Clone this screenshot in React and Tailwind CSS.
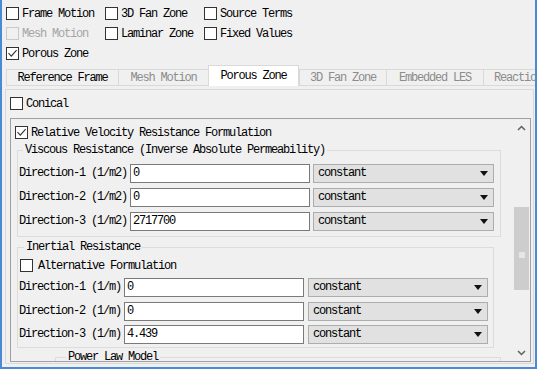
import React from "react";

function Box({ checked, disabled }) {
  return (
    <span
      className={
        disabled
          ? "w-[13px] h-[13px] border border-[#c8c8c8] bg-[#f0f0f0] flex items-center justify-center shrink-0"
          : "w-[13px] h-[13px] border border-[#333333] bg-white flex items-center justify-center shrink-0"
      }
    >
      {checked && (
        <svg width="11" height="11" viewBox="0 0 11 11">
          <path d="M1.5 5.2 L4.3 8.2 L9.6 2.2" stroke="#333333" strokeWidth="1.1" fill="none" />
        </svg>
      )}
    </span>
  );
}

function Check({ label, checked, disabled, gap }) {
  return (
    <div className={gap ? "flex items-center h-[13px] gap-[5px]" : "flex items-center h-[13px] gap-[3px]"}>
      <Box checked={checked} disabled={disabled} />
      <span className={disabled ? "leading-[13px] pt-[1px] text-[#a5a5a5] whitespace-nowrap" : "leading-[13px] pt-[1px] text-black whitespace-nowrap"}>
        {label}
      </span>
    </div>
  );
}

function Tab({ label, w, selected, disabled }) {
  if (selected) {
    return (
      <div
        className={`${w} h-[21px] bg-white border-t border-l border-r border-[#d9d9d9] flex items-center justify-center whitespace-nowrap text-black shrink-0`}
      >
        {label}
      </div>
    );
  }
  return (
    <div
      className={`${w} h-[17px] bg-[#f0f0f0] border-t border-l border-b border-[#d9d9d9] flex items-center justify-center whitespace-nowrap shrink-0 ${
        disabled ? "text-[#8c8c8c]" : "text-black"
      }`}
    >
      {label}
    </div>
  );
}

function Dropdown({ w }) {
  return (
    <div className={`${w} h-[19px] bg-[#e1e1e1] border border-[#adadad] flex items-center justify-between pl-[4px] pr-[5px] shrink-0`}>
      <span className="leading-[17px]">constant</span>
      <svg width="8" height="5" viewBox="0 0 8 5">
        <path d="M0 0 L8 0 L4 5 Z" fill="#111111" />
      </svg>
    </div>
  );
}

function Row({ label, value, labelW, inputW, ddW, gap }) {
  return (
    <div className="flex items-center h-[19px]">
      <div className={`${labelW} whitespace-nowrap leading-[19px] shrink-0`}>{label}</div>
      <div className={`${inputW} h-[19px] bg-white border border-[#7a7a7a] pl-[2px] leading-[17px] shrink-0`}>{value}</div>
      <div className={gap} />
      <Dropdown w={ddW} />
    </div>
  );
}

export default function App() {
  return (
    <div className="w-[537px] h-[369px] box-border bg-[#f0f0f0] border-l-2 border-r-2 border-b-2 border-[#4a8ad4] overflow-hidden font-mono text-[12px] tracking-[-1.2px] text-black flex flex-col">
      {/* top checkboxes */}
      <div className="h-[65px] pt-[7px] pl-[4px] shrink-0">
        <div className="grid grid-cols-[99px_99px_99px] auto-rows-[20px]">
          <Check label="Frame Motion" />
          <Check label="3D Fan Zone" />
          <Check label="Source Terms" />
          <Check label="Mesh Motion" disabled />
          <Check label="Laminar Zone" />
          <Check label="Fixed Values" />
          <Check label="Porous Zone" checked />
        </div>
      </div>

      {/* tab bar */}
      <div className="flex items-end h-[21px] pl-[4px] shrink-0 overflow-hidden">
        <Tab label="Reference Frame" w="w-[112px]" />
        <Tab label="Mesh Motion" w="w-[90px]" disabled />
        <Tab label="Porous Zone" w="w-[91px]" selected />
        <Tab label="3D Fan Zone" w="w-[87px]" disabled />
        <Tab label="Embedded LES" w="w-[97px]" disabled />
        <div className="w-[90px] h-[17px] bg-[#f0f0f0] border-t border-l border-b border-[#d9d9d9] flex items-center pl-[10px] whitespace-nowrap text-[#8c8c8c] shrink-0">
          Reaction
        </div>
      </div>

      {/* pane */}
      <div className="mt-[3px] ml-[3px] mr-[1px] h-[275px] border border-[#d9d9d9] flex flex-col shrink-0">
        <div className="pt-[7px] pl-[4px]">
          <Check label="Conical" />
        </div>
        <div className="mt-[8px] ml-[4px] mr-[2px] h-[244px] border border-[#a0a0a0] flex">
          {/* content */}
          <div className="flex-1 overflow-hidden flex flex-col">
            <div className="pt-[7px] pl-[4px]">
              <Check label="Relative Velocity Resistance Formulation" checked />
            </div>

            <fieldset className="mt-[5px] ml-[6px] w-[484px] border border-[#dcdcdc] shrink-0">
              <legend className="ml-[5px] px-[2px] leading-[13px]">Viscous Resistance (Inverse Absolute Permeability)</legend>
              <div className="pt-[7px] pb-[5px] flex flex-col gap-[5px]">
                <Row label="Direction-1 (1/m2)" value="0" labelW="w-[112px] pl-[1px]" inputW="w-[180px]" gap="w-[3px]" ddW="w-[181px]" />
                <Row label="Direction-2 (1/m2)" value="0" labelW="w-[112px] pl-[1px]" inputW="w-[180px]" gap="w-[3px]" ddW="w-[181px]" />
                <Row label="Direction-3 (1/m2)" value="2717700" labelW="w-[112px] pl-[1px]" inputW="w-[180px]" gap="w-[3px]" ddW="w-[181px]" />
              </div>
            </fieldset>

            <fieldset className="mt-[4px] ml-[6px] w-[477px] border border-[#dcdcdc] shrink-0">
              <legend className="ml-[6px] px-[2px] leading-[13px]">Inertial Resistance</legend>
              <div className="pt-[5px] pb-[3px] flex flex-col">
                <div className="pl-[2px]">
                  <Check label="Alternative Formulation" gap />
                </div>
                <div className="mt-[6px] flex flex-col gap-[4.5px]">
                  <Row label="Direction-1 (1/m)" value="0" labelW="w-[106px] pl-[1px]" inputW="w-[180px]" gap="w-[4px]" ddW="w-[180px]" />
                  <Row label="Direction-2 (1/m)" value="0" labelW="w-[106px] pl-[1px]" inputW="w-[180px]" gap="w-[4px]" ddW="w-[180px]" />
                  <Row label="Direction-3 (1/m)" value="4.439" labelW="w-[106px] pl-[1px]" inputW="w-[180px]" gap="w-[4px]" ddW="w-[180px]" />
                </div>
              </div>
            </fieldset>

            <fieldset className="mt-[3px] ml-[44px] w-[446px] h-[40px] border border-[#dcdcdc] shrink-0">
              <legend className="ml-[10px] px-[2px] leading-[13px]">Power Law Model</legend>
            </fieldset>
          </div>

          {/* scrollbar */}
          <div className="w-[17px] flex flex-col shrink-0 bg-[#f0f0f0]">
            <div className="h-[17px] flex items-center justify-center">
              <svg width="9" height="6" viewBox="0 0 9 6">
                <path d="M1 5 L4.5 1.5 L8 5" stroke="#606060" strokeWidth="1.5" fill="none" />
              </svg>
            </div>
            <div className="h-[71px]" />
            <div className="mx-[1px] h-[83px] bg-[#cdcdcd] flex flex-col items-center pt-[45px]">
              <div className="w-[6px] h-[6px] bg-[#e6e6e6]" />
            </div>
            <div className="flex-1" />
            <div className="h-[17px] flex items-center justify-center">
              <svg width="9" height="6" viewBox="0 0 9 6">
                <path d="M1 1 L4.5 4.5 L8 1" stroke="#606060" strokeWidth="1.5" fill="none" />
              </svg>
            </div>
          </div>
        </div>
      </div>
    </div>
  );
}
